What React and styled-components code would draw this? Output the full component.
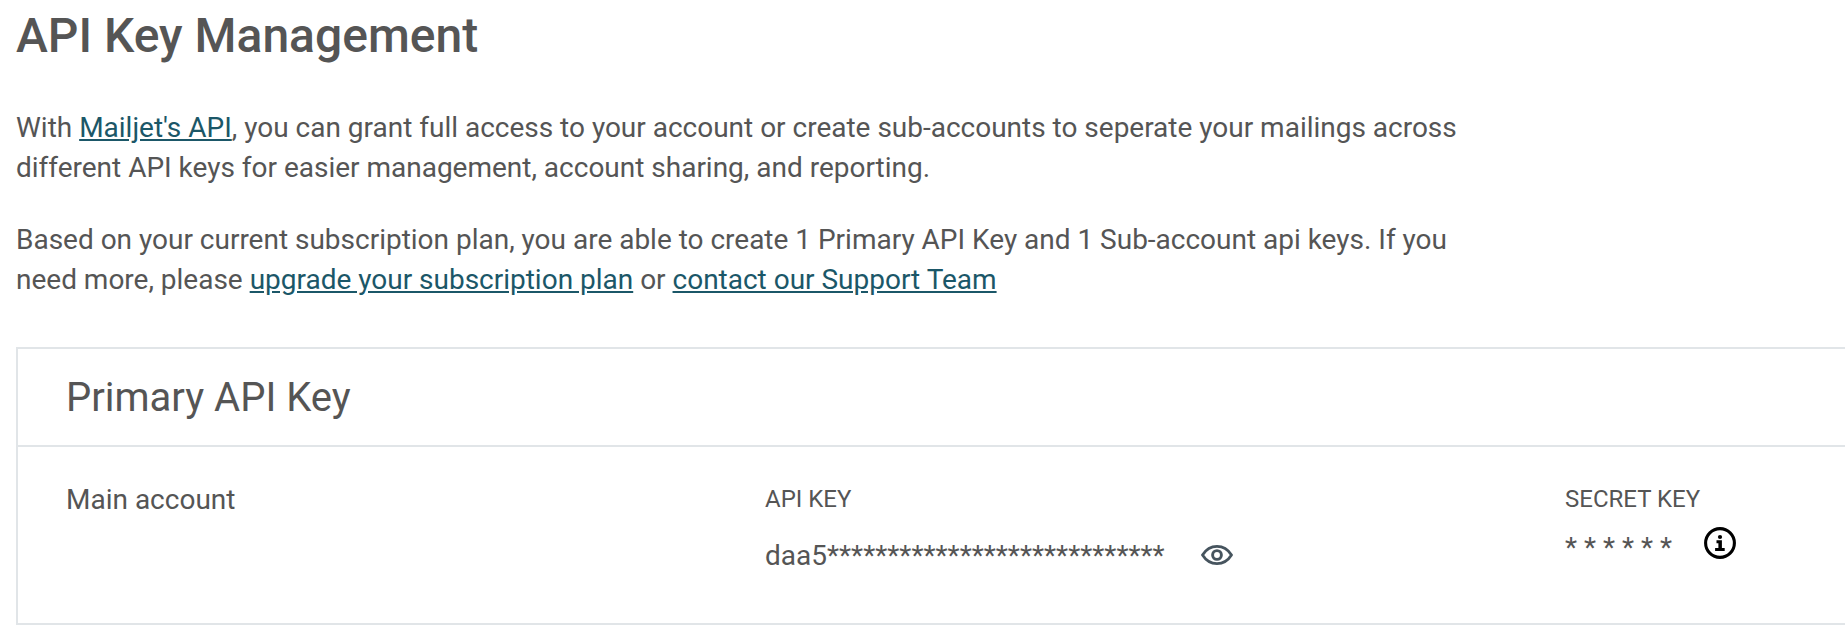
import React from 'react';
import styled, { createGlobalStyle } from 'styled-components';

const GlobalStyle = createGlobalStyle`
  * { box-sizing: border-box; }
  html { overflow: hidden; }
  body {
    margin: 0;
    background: #fff;
    color: #555;
    font-family: Roboto, "Liberation Sans", sans-serif;
    font-size: 28px;
    line-height: 40px;
  }
`;

const Page = styled.main`
  height: 644px;
  padding: 8px 0 0 16px;
  overflow: hidden;
`;

const Title = styled.h1`
  margin: 0 0 44px;
  font-size: 48px;
  line-height: 56px;
  font-weight: 500;
`;

const Paragraph = styled.p`
  margin: 0 0 32px;
  width: 1460px;
  white-space: nowrap;
  letter-spacing: -0.009px;
`;

const Link = styled.a`
  color: #1b5768;
  text-decoration: underline;
`;

const Panel = styled.section`
  margin-top: 47px;
  border: 2px solid #e1e5e8;
  border-right: 0;
`;

const PanelHeader = styled.header`
  height: 98px;
  padding: 25px 48px 23px;
  border-bottom: 2px solid #e1e5e8;
`;

const PanelTitle = styled.h2`
  margin: 0;
  font-size: 40px;
  line-height: 48px;
  font-weight: 400;
`;

const AccountRow = styled.div`
  display: grid;
  grid-template-columns: 699px 800px 1fr;
  height: 176px;
  padding: 32px 0 0 48px;
`;

const AccountName = styled.div`
  padding-top: 1px;
`;

const Cell = styled.div`
  display: flex;
  flex-direction: column;
`;

const Label = styled.div`
  font-size: 24px;
`;

const KeyLine = styled.div`
  display: flex;
  align-items: ${(p) => p.$align};
  height: 40px;
  margin-top: ${(p) => p.$top}px;
  gap: ${(p) => p.$gap}px;
`;

const KeyValue = styled.span`
  height: 40px;
  padding-top: 1px;
`;

const Icon = styled.svg`
  display: block;
  flex: none;
`;

function EyeIcon() {
  return (
    <Icon width="32" height="20" viewBox="0 0 32 20" fill="none" stroke="#46545e">
      <path d="M1.5 10C4.7 4.9 9.8 1.4 16 1.4S27.3 4.9 30.5 10C27.3 15.1 22.2 18.6 16 18.6S4.7 15.1 1.5 10Z" strokeWidth="2.8" strokeLinejoin="round" />
      <circle cx="16" cy="10" r="4.4" strokeWidth="2.9" />
    </Icon>
  );
}

function InfoIcon() {
  return (
    <Icon width="32" height="32" viewBox="0 0 32 32">
      <circle cx="16" cy="16" r="14.4" fill="none" stroke="#000" strokeWidth="3.1" />
      <circle cx="16" cy="10" r="2.1" />
      <path d="M12.5 13.2h5.4v7.8h2.8v3.1h-9.6V21h3.3v-4.7h-1.9Z" />
    </Icon>
  );
}

export default function App() {
  return (
    <>
      <GlobalStyle />
      <Page>
        <Title>API Key Management</Title>
        <Paragraph>
          With <Link>Mailjet's API</Link>, you can grant full access to your account or create sub-accounts to seperate your mailings across<br />
          different API keys for easier management, account sharing, and reporting.
        </Paragraph>
        <Paragraph>
          Based on your current subscription plan, you are able to create 1 Primary API Key and 1 Sub-account api keys. If you<br />
          need more, please <Link>upgrade your subscription plan</Link> or <Link>contact our Support Team</Link>
        </Paragraph>
        <Panel>
          <PanelHeader><PanelTitle>Primary API Key</PanelTitle></PanelHeader>
          <AccountRow>
            <AccountName>Main account</AccountName>
            <Cell>
              <Label>API KEY</Label>
              <KeyLine $top={16} $gap={36} $align="center">
                <KeyValue>{'daa5' + '*'.repeat(28)}</KeyValue>
                <EyeIcon />
              </KeyLine>
            </Cell>
            <Cell>
              <Label>SECRET KEY</Label>
              <KeyLine $top={8} $gap={32} $align="flex-start">
                <KeyValue>* * * * * *</KeyValue>
                <InfoIcon />
              </KeyLine>
            </Cell>
          </AccountRow>
        </Panel>
      </Page>
    </>
  );
}
